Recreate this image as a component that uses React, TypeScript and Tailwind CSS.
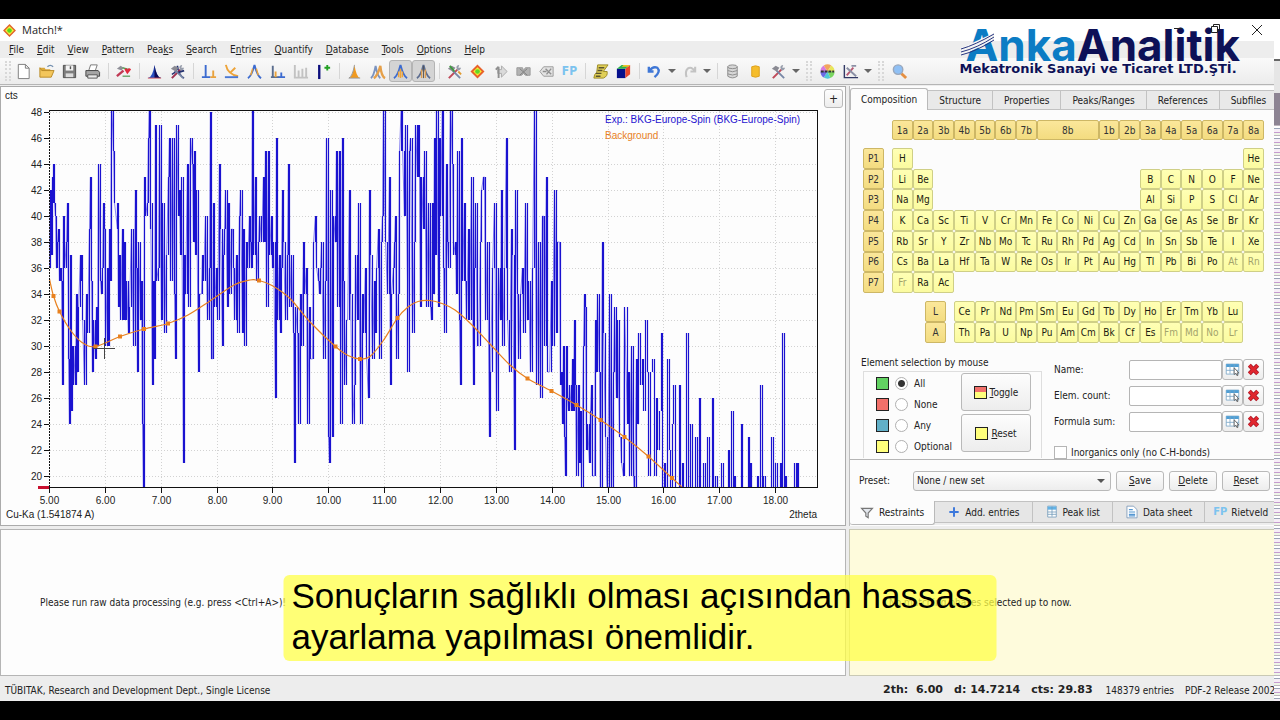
import type { ReactNode } from "react";

const ORANGE = "#e8811f";

// Measured counts, one block per part of the scan: "x,counts" with x in thirds of a pixel.
const SCAN_BLOCKS = [
	{
		offset: 0,
		data: "148,36 150,42 152,37 155,43 158,41 160,44 163,41 165,40 167,36 170,38 174,39 177,35 180,36 182,35 186,27 190,40 193,36 198,38 201,41 204,32 205,29 208,24 211,37 213,25 217,30 220,27 224,30 226,27 229,34 231,28 235,33 239,37 242,35 245,37 247,32 252,27 257,34 262,31 266,39 270,43 273,35 277,28 280,32 284,29 288,33 291,30 295,44 300,35 303,34 306,36 309,41 313,39 316,30 320,36 323,30 328,39 331,35 334,49 338,45 342,41 350,39 351,41 354,33 357,37 361,32 365,39 370,32 372,38 376,32 378,35 383,31 388,33 393,39 399,30 404,42 408,36 412,28 415,38 419,32 422,35 425,24 428,19 431,43 436,40 440,41 443,46 446,49 449,39 451,41 455,27 458,35 461,29 465,47 469,35 473,36 478,47 482,32 486,41 492,31 498,37 503,43 508,46 511,35 517,46 522,34 525,29 529,47 534,40 538,42 541,37 544,43 549,21 553,37 556,34 560,44 565,33 571,46 575,44 578,38 582,45 586,37 589,42 594,28 598,34 602,34 606,37 610,35 614,40 621,32 626,36 630,48 634,29 636,29 639,41 643,33 647,36 651,32 656,44 660,39 665,30 669,37 673,39 676,42 680,33 684,41 688,34 692,39 696,39 699,36 703,32 708,37 712,31 716,40 720,42 725,31 728,39 732,30 737,38 741,36 746,40 750,38 752,36 755,49 758,45 760,37 764,43 769,35 773,38 778,40 782,38 788,43 791,38 795,45 798,33 803,45 807,37 812,40 815,36 818,38 824,26 827,46 832,32 836,37",
	},
	{
		offset: 810,
		data: "30,31 34,36 37,42 40,38 45,32 50,37 54,44 58,33 63,37 68,31 71,21 75,33 80,31 85,24 89,34 93,30 98,37 100,38 103,34 108,36 112,24 116,33 121,29 125,29 129,38 134,40 138,36 143,35 147,34 150,36 154,38 160,29 164,35 169,46 174,23 177,21 180,42 185,23 187,23 190,40 194,38 197,45 201,33 206,45 209,30 211,24 216,46 218,35 223,27 228,32 232,32 236,42 241,34 247,24 251,27 256,37 261,32 265,41 270,24 275,34 279,31 284,36 289,29 293,26 298,42 301,37 306,29 311,35 315,31 318,36 323,39 328,29 332,38 336,40 339,49 344,38 351,34 356,43 360,27 364,34 368,36 371,38 374,40 379,29 384,34 388,45 392,49 397,45 401,40 405,47 410,35 412,28 416,45 421,46 426,31 431,38 436,47 440,43 443,47 446,43 450,33 454,43 459,39 463,45 469,33 475,41 480,33 482,32 485,41 489,34 492,46 496,37 499,49 503,33 508,46 510,40 516,49 519,36 522,31 527,44 531,38 535,36 540,49 545,44 549,37 554,38 558,34 562,45 567,32 569,27 573,46 577,35 581,41 585,35 589,32 593,39 597,32 604,43 608,27 612,36 616,41 620,30 625,30 629,38 634,42 638,43 642,43 646,32 650,38 656,23 660,28 666,36 672,41 679,25 684,36 689,32 693,42 697,30 703,36 708,46 712,32 718,28 722,39 727,37 731,22 736,42 741,34 745,29 750,34 756,36 760,31 765,41 770,32 775,35 780,28 787,36 793,49 798,27 803,38 810,26 815,40 820,40 823,30 827,43 832,28 837,28 842,35 846,30 852,42 857,31 862,38 866,38 869,27",
	},
	{
		offset: 1650,
		data: "33,28 35,24 38,30 43,23 44,20 48,30 51,26 54,25 58,27 62,25 65,29 68,25 72,32 76,27 79,20 83,27 88,21 90,25 94,19 98,30 101,34 104,33 108,22 112,24 116,21 120,25 123,27 127,20 131,20 134,32 139,28 142,34 146,28 151,18 156,38 160,31 165,23 170,18 178,34 184,18 188,28 193,33 197,26 202,32 206,23 211,23 214,21 220,20 223,33 230,24 234,28 238,20 244,30 248,20 252,18 257,29 262,24 265,31 270,27 275,29 280,25 285,32 290,28 295,20 301,28 305,29 311,20 317,26 322,22 328,25 332,31 337,18 342,21 346,18 352,29 356,22 361,18 366,24 370,27 374,18 386,27 390,18 396,21 400,18 408,31 414,18 420,24 425,18 434,23 440,18 446,26 450,18 460,21 465,18 471,23 476,18 485,26 490,18 496,20 500,18 514,21 519,18 533,22 537,18 544,25 548,18 552,20 556,18 572,24 577,18 594,23 598,18 600,21 604,18 620,20 624,18 631,27 636,18 640,20 644,18 664,23 668,18 676,21 680,18 690,21 694,18 697,31 702,18 705,20 708,18 733,21 738,18 742,21 744,18",
	},
];

const countY = (value: number) => 112 + (48 - value) * 13;

const scanPoints = SCAN_BLOCKS.flatMap((block) =>
	block.data.split(" ").map((pair) => {
		const [x, value] = pair.split(",").map(Number);
		return [Math.round((x + block.offset) / 3) + 0.5, countY(value)];
	}),
);
const scanLine = scanPoints
	.filter((p) => p[0] < 640)
	.map((p) => p.join(","))
	.join(" ");
const scanBars = scanPoints
	.slice(1)
	.map((p, i) => `M${p[0]} ${scanPoints[i][1]}V${p[1]}`)
	.join("");

// Background curve; the third entry marks the draggable control points.
const BACKGROUND: [number, number, number][] = [
	[49.5, 279, 0], [53.5, 296, 1], [59.5, 311.5, 1], [70, 329.5, 0], [82, 342.5, 0],
	[95.5, 346.5, 1], [120, 336.5, 1], [144, 329, 1], [168, 323.5, 1], [188, 315, 0],
	[210, 301, 0], [234, 285, 0], [250, 280, 0], [259, 280.5, 1], [272, 285.5, 0],
	[290, 298.5, 0], [310, 322, 0], [335.5, 346.5, 1], [348, 355.5, 0], [360, 359, 1],
	[370, 356.5, 0], [383, 341, 0], [397.5, 318, 1], [408, 307, 0], [418, 301.5, 0],
	[430, 300.5, 0], [442, 303.5, 0], [455, 310, 0], [471, 324, 0], [490, 344, 0],
	[510, 365, 0], [527.5, 378.5, 1], [551.5, 391, 1], [576.5, 405, 1], [600.5, 420, 1],
	[624.5, 437, 1], [648.5, 456.5, 1], [672, 478, 1], [682, 487, 0],
];

const backgroundPath = BACKGROUND.map((p, i) => {
	if (i === 0) return `M${p[0]} ${p[1]}`;
	const a = BACKGROUND[Math.max(i - 2, 0)];
	const b = BACKGROUND[i - 1];
	const d = BACKGROUND[Math.min(i + 1, BACKGROUND.length - 1)];
	return `C${b[0] + (p[0] - a[0]) / 6} ${b[1] + (p[1] - a[1]) / 6} ${p[0] - (d[0] - b[0]) / 6} ${p[1] - (d[1] - b[1]) / 6} ${p[0]} ${p[1]}`;
}).join("");

const X_TICKS = Array.from({ length: 14 }, (_, i) => ({
	x: Math.round(49 + i * 55.85) + 0.5,
	label: `${i + 5}.00`,
}));
const Y_TICKS = Array.from({ length: 15 }, (_, i) => 48 - i * 2);

const Chart = () => (
	<svg
		viewBox="1 87 844 438"
		className="block w-full font-['Liberation_Sans'] text-[10px]"
		role="img"
		aria-label="Diffraction pattern"
	>
		<g fill="#222">
			<text x="5" y="99">cts</text>
			<text x="6" y="518">Cu-Ka (1.541874 A)</text>
			<text x="817" y="518" textAnchor="end">2theta</text>
			{Y_TICKS.map((v) => (
				<text key={v} x="42" y={countY(v) + 4} textAnchor="end">{v}</text>
			))}
			{X_TICKS.map((t) => (
				<text key={t.label} x={t.x} y="504" textAnchor="middle">{t.label}</text>
			))}
		</g>
		<g stroke="#d2d2d2" strokeDasharray="1 2">
			{Y_TICKS.map((v) => (
				<path key={v} d={`M50 ${countY(v) + 0.5}H817`} />
			))}
			{X_TICKS.map((t) => (
				<path key={t.label} d={`M${t.x} 111V487`} />
			))}
		</g>
		<clipPath id="plot">
			<rect x="49" y="111" width="769" height="377" />
		</clipPath>
		<g clipPath="url(#plot)" fill="none">
			<polyline points={scanLine} stroke="#8f8af2" strokeWidth="1" />
			<path d={scanBars} stroke="#1a12d0" strokeWidth="1.2" />
			<path d={backgroundPath} stroke={ORANGE} strokeWidth="1.2" />
		</g>
		<g fill={ORANGE}>
			{BACKGROUND.filter((p) => p[2]).map((p) => (
				<rect key={p[0]} x={p[0] - 2} y={p[1] - 2} width="4" height="4" />
			))}
		</g>
		<path d="M93 348.5H115M104.5 338V359" stroke="#444" />
		<path d="M49 110.5H818M817.5 110V488M49 487.5H818" stroke="#111" fill="none" />
		<path d="M49.5 110V488" stroke="#111" strokeDasharray="2 1" />
		<g stroke="#111">
			{Y_TICKS.map((v) => (
				<path key={v} d={`M44 ${countY(v) + 0.5}H49`} />
			))}
			{X_TICKS.map((t) => (
				<path key={t.label} d={`M${t.x} 488V493`} />
			))}
		</g>
		<path d="M38 487.5H49" stroke="#c8102e" strokeWidth="3" />
		<text x="605" y="123" fill="#1f14d0">Exp.: BKG-Europe-Spin (BKG-Europe-Spin)</text>
		<text x="605" y="139" fill={ORANGE}>Background</text>
	</svg>
);

const Mnemonic = ({ text }: { text: string }) => {
	const [before, after] = text.split("&");
	if (after === undefined) return <>{text}</>;
	return (
		<span>
			{before}
			<u className="underline-offset-1">{after[0]}</u>
			{after.slice(1)}
		</span>
	);
};

const Icon = ({ children, size = 18 }: { children: ReactNode; size?: number }) => (
	<svg viewBox="0 0 18 18" width={size} height={size} fill="none" className="shrink-0" aria-hidden="true">
		{children}
	</svg>
);

const DiamondIcon = ({ size = 18 }: { size?: number }) => (
	<Icon size={size}>
		<path d="M9 1.5L16.5 9L9 16.5L1.5 9Z" fill="#f5f03a" stroke="#e0642a" strokeWidth="2" />
		<circle cx="9" cy="9" r="3.2" fill="#58d81f" />
	</Icon>
);

const Tools = ({ handle = "#c04a5a" }: { handle?: string }) => (
	<>
		<path d="M3 16L12 7" stroke={handle} strokeWidth="2.2" />
		<path d="M15 16L7 8" stroke="#7787a6" strokeWidth="2" />
		<path d="M2 6L6 3L10 5L7 9Z" fill="#8a8a93" />
		<path d="M11 5Q11 2 14 2L13 5L16 5Q15 8 12 8Z" fill="#979dab" />
	</>
);

const Peak = ({ color }: { color: string }) => (
	<path d="M3 16Q7 15 9 2Q11 15 15 16Z" fill={color} />
);

const Cylinder = ({ color, edge }: { color: string; edge: string }) => (
	<>
		<path d="M4 4V14Q9 17.500 14 14V4Z" fill={color} stroke={edge} />
		<ellipse cx="9" cy="4" rx="5" ry="2" fill={color} stroke={edge} />
	</>
);

type Tool = { name: string; icon?: ReactNode; pressed?: boolean; kind?: "sep" | "arrow" | "handle" };

const sep: Tool = { name: "", kind: "sep" };

const TOOLS: Tool[] = [
	{ name: "New", icon: <path d="M3.500 1.500H11L15 5.500V16.500H3.500ZM11 1.500V5.500H15" fill="#fff" stroke="#7b7b7b" /> },
	{
		name: "Open",
		icon: (
			<>
				<path d="M2 5H7L8 6.500H13V9H2Z" fill="#d9a83c" />
				<path d="M2 15V5L4 8H17L14 15Z" fill="#f3c65c" stroke="#b98a28" />
				<path d="M10 4Q13 1 16 4" stroke="#7390b0" strokeWidth="1.500" />
			</>
		),
	},
	{
		name: "Save",
		icon: (
			<>
				<path d="M2.500 2.500H15.500V15.500H2.500Z" fill="#7d7d7d" stroke="#4c4c4c" />
				<path d="M5 2.500H13V8H5Z" fill="#f4f4f4" />
				<path d="M5 11H13V15H5Z" fill="#dcdcdc" />
				<path d="M10 3.500V6.500" stroke="#555" strokeWidth="1.500" />
			</>
		),
	},
	{
		name: "Print",
		icon: (
			<>
				<path d="M5 8L7 2H14L12 8Z" fill="#fff" stroke="#777" />
				<path d="M2 8H15L16.500 10V14H2Z" fill="#a5a5a5" stroke="#444" />
				<path d="M4 12.500H14V16H4Z" fill="#e8e8e8" stroke="#555" />
			</>
		),
	},
	sep,
	{
		name: "Import",
		icon: (
			<>
				<path d="M2 14L9 8" stroke="#c03a55" strokeWidth="2.500" />
				<path d="M2 6L6 3L9 5L7 8Z" fill="#8f8f98" />
				<path d="M8 5L15 7" stroke="#5aa355" strokeWidth="1.500" />
				<path d="M10 7Q12 4 13 7Q15 4 17 7L13 12Z" fill="#e02c3e" />
				<path d="M8 14H16" stroke="#6aa56b" strokeWidth="1.500" />
			</>
		),
	},
	sep,
	{
		name: "Process raw data",
		icon: (
			<>
				<path d="M2 16Q7 15 9 2Q11 15 16 16Z" fill="#2a4fc0" />
				<path d="M9 2Q11 15 16 16H9Z" fill="#0d0a55" />
				<path d="M2 16H16" stroke="#cf5560" />
			</>
		),
	},
	{
		name: "Processing options",
		icon: (
			<>
				<path d="M9 3Q10 13 16 16M9 3Q8 10 3 12" stroke="#23306e" strokeWidth="1.500" />
				<Tools handle="#a03050" />
				<path d="M10 10L16 8" stroke="#23306e" strokeWidth="2" />
			</>
		),
	},
	sep,
	{ name: "Strip alpha2", icon: <><path d="M6 2V15M2 15H11" stroke="#3c6bd0" strokeWidth="2" /><path d="M14 8V15M11 15H17" stroke="#e9a23c" strokeWidth="2" /></> },
	{ name: "Subtract background", icon: <><path d="M3 2Q5 12 16 14M8 10L13 5" stroke="#eda43a" strokeWidth="2" /><path d="M2 15H16" stroke="#4a78d4" strokeWidth="2" /></> },
	{ name: "Smooth", icon: <><path d="M2 16Q6 14 9 2Q12 14 16 16" stroke="#3c6bd0" strokeWidth="2" /><path d="M5 13L7 6M11 6L13 13" stroke="#eda43a" strokeWidth="1.500" /></> },
	{ name: "Search peaks", icon: <><path d="M4 3V15M2 15H11" stroke="#5a6d8e" strokeWidth="2" /><path d="M7 9V15" stroke="#eda43a" strokeWidth="2" /><path d="M13 10V15M10 15H17" stroke="#3c6bd0" strokeWidth="2" /></> },
	{ name: "Profile", icon: <path d="M3 2V15M7 8V15M11 6V15M15 5V15M2 15.500H17" stroke="#c2c2c2" strokeWidth="2" /> },
	{ name: "Add peak", icon: <><path d="M4.500 2V17" stroke="#0b0d7c" strokeWidth="2.500" /><path d="M10 5H16M13 2V8" stroke="#23a023" strokeWidth="2" /></> },
	sep,
	{ name: "Fit one", icon: <><Peak color="#f09a20" /><path d="M9 2Q7 14 3 16H15" stroke="#999" /></> },
	{ name: "Fit group", icon: <><path d="M2 16Q5 14 7 3Q9 14 12 16" stroke="#7b93bf" strokeWidth="2" /><path d="M5 16Q9 14 12 3Q13 14 17 16" stroke="#e5a04a" strokeWidth="2.500" /></> },
	{ name: "Fit profile", pressed: true, icon: <><path d="M2 16Q6 14 9 2Q12 14 16 16" stroke="#3c6bd0" strokeWidth="2" /><path d="M9 6V16M7 9V15M11 9V15" stroke="#eda43a" strokeWidth="1.500" /></> },
	{ name: "Show peaks", pressed: true, icon: <><path d="M2 16Q6 14 9 2Q12 14 16 16" stroke="#5b6c90" strokeWidth="2" /><path d="M7 7V16M11 7V16" stroke="#dc9d50" strokeWidth="1.500" /><path d="M9 3V16" stroke="#555" /></> },
	sep,
	{ name: "Search options", icon: <><Tools /><path d="M4 3L9 9" stroke="#3f9a3f" strokeWidth="2" /><path d="M13 9L16 12" stroke="#e09a30" strokeWidth="2" /></> },
	{ name: "Start search", icon: <><path d="M9 3L15 9L9 15L3 9Z" fill="#f5ee30" stroke="#e8602a" strokeWidth="2" /><circle cx="9" cy="9" r="2.500" fill="#62d62a" /></> },
	{ name: "Select entry", icon: <><path d="M10 3L16 9L10 15V11H6V7H10Z" fill="#dadada" stroke="#aaa" /><path d="M7 4V16M4 7L7 4" stroke="#8f8f8f" strokeWidth="2" /></> },
	{ name: "Discard", icon: <><path d="M2 5H8L9 8L11 5H16V13H11L9 11L7 13H2Z" fill="#b3b3b3" stroke="#999" /><path d="M5 6L13 13M13 6L5 13" stroke="#7d7d7d" /></> },
	{ name: "Structure", icon: <><path d="M6 4H16V14H6L2 9Z" fill="#e3e3e3" stroke="#9a9a9a" /><path d="M5 9H9M8 6L14 12M14 6L9 12" stroke="#909090" strokeWidth="1.500" /></> },
	{ name: "Full pattern", icon: <span className="text-[12px] font-bold text-[#7cc3ef]">FP</span> },
	sep,
	{ name: "Report", icon: <><path d="M6 2H17L12 9H16Q17 14 12 16H2Q2 12 5 10Z" fill="#e0cf58" stroke="#9c8a22" /><path d="M7 5H13M6 8H11M4 11H10M4 14H9" stroke="#5b5530" strokeWidth="1.500" /></> },
	{ name: "3D view", icon: <><path d="M2 6H11V16H2Z" fill="#06108c" /><path d="M2 6L7 2H16L11 6Z" fill="#2bb34a" /><path d="M11 6L16 2V12L11 16Z" fill="#e8472c" /><path d="M9 2H16L14 4H7Z" fill="#f0c32a" /></> },
	sep,
	{ name: "Undo", icon: <path d="M3 4V9H8M3 9Q7 3 12 5Q16 9 9 15" stroke="#3f77d6" strokeWidth="2.500" /> },
	{ name: "Undo list", kind: "arrow" },
	{ name: "Redo", icon: <path d="M15 4V9H10M15 9Q11 3 7 6Q4 9 6 15" stroke="#c3c3c3" strokeWidth="2.200" /> },
	{ name: "Redo list", kind: "arrow" },
	sep,
	{ name: "Reference database", icon: <><Cylinder color="#d6d6d6" edge="#8b8b8b" /><path d="M4 8Q9 10.500 14 8M4 11.500Q9 14 14 11.500" stroke="#8b8b8b" /></> },
	{ name: "User database", icon: <path d="M5 4Q9 2 13 4V14Q9 16 5 14Z" fill="#f5bd2c" stroke="#dda01f" /> },
	{ name: "Database tools", icon: <Tools /> },
	{ name: "Database tools list", kind: "arrow" },
	{ name: "", kind: "handle" },
	{
		name: "Colors",
		icon: (
			<>
				<path d="M9 9L1.500 9A7.500 7.500 0 0 1 5 2.600Z" fill="#d77be0" />
				<path d="M9 9L5 2.600A7.500 7.500 0 0 1 13 2.600Z" fill="#f2a55e" />
				<path d="M9 9L13 2.600A7.500 7.500 0 0 1 16.500 9Z" fill="#e8e65a" />
				<path d="M9 9L16.500 9A7.500 7.500 0 0 1 12 15.900Z" fill="#7ad65f" />
				<path d="M9 9L12 15.900A7.500 7.500 0 0 1 5 15.400Z" fill="#52c9d8" />
				<path d="M9 9L5 15.400A7.500 7.500 0 0 1 1.500 9Z" fill="#6c6ae6" />
				<path d="M2 9H16" stroke="#333" strokeWidth="2" strokeDasharray="3 1" />
			</>
		),
	},
	{ name: "Graph options", icon: <><path d="M2.500 2V15.500H17" stroke="#333a66" strokeWidth="1.500" /><path d="M5 13L12 5" stroke="#b65a74" strokeWidth="2" /><path d="M5 5L15 14M10 3H15" stroke="#8b90a5" strokeWidth="2" /></> },
	{ name: "Graph options list", kind: "arrow" },
	{ name: "", kind: "handle" },
	{ name: "Zoom", icon: <><path d="M11 11L16 16" stroke="#e59042" strokeWidth="3" /><circle cx="7.500" cy="7" r="5" fill="#8fc0f5" stroke="#9aa7bb" strokeWidth="1.500" /></> },
];

const ToolbarItem = ({ tool }: { tool: Tool }) => {
	if (tool.kind === "sep") return <span className="mr-[3px] ml-1 h-4 w-px shrink-0 border-r border-[#d6d6d6]" />;
	if (tool.kind === "handle") {
		return <span className="mx-1 h-5 w-[6px] shrink-0 border-x-2 border-dotted border-[#d8d8d8]" />;
	}
	if (tool.kind === "arrow") {
		return (
			<button type="button" aria-label={tool.name} className="flex w-3 shrink-0 justify-center">
				<span className="border-x-4 border-t-4 border-x-transparent border-t-[#666]" />
			</button>
		);
	}
	return (
		<button
			type="button"
			aria-label={tool.name}
			className={
				tool.pressed
					? "flex h-[22px] w-[23px] shrink-0 items-center justify-center rounded-[3px] border border-[#b4b4b4] bg-[#d4d4d4]"
					: "flex h-[22px] w-[23px] shrink-0 items-center justify-center"
			}
		>
			{tool.name === "Full pattern" ? tool.icon : <Icon size={17}>{tool.icon}</Icon>}
		</button>
	);
};

const MENUS = ["&File", "&Edit", "&View", "&Pattern", "Pea&ks", "&Search", "E&ntries", "&Quantify", "&Database", "&Tools", "&Options", "&Help"];

const GROUPS = ["1a", "2a", "3b", "4b", "5b", "6b", "7b", "8b", "1b", "2b", "3a", "4a", "5a", "6a", "7a", "8a"];

const PERIODS = [
	"H - - - - - - - - - - - - - - - - He",
	"Li Be - - - - - - - - - - B C N O F Ne",
	"Na Mg - - - - - - - - - - Al Si P S Cl Ar",
	"K Ca Sc Ti V Cr Mn Fe Co Ni Cu Zn Ga Ge As Se Br Kr",
	"Rb Sr Y Zr Nb Mo Tc Ru Rh Pd Ag Cd In Sn Sb Te I Xe",
	"Cs Ba La Hf Ta W Re Os Ir Pt Au Hg Tl Pb Bi Po At Rn",
	"Fr Ra Ac - - - - - - - - - - - - - - -",
];

const SERIES = [
	"Ce Pr Nd Pm Sm Eu Gd Tb Dy Ho Er Tm Yb Lu",
	"Th Pa U Np Pu Am Cm Bk Cf Es Fm Md No Lr",
];

const DISABLED = ["At", "Rn", "Fr", "Fm", "Md", "No", "Lr"];

const ElementCell = ({ symbol }: { symbol: string }) => {
	if (symbol === "-") return <span />;
	return (
		<button
			type="button"
			disabled={DISABLED.includes(symbol)}
			className="rounded-[2px] border border-[#cfcf86] bg-linear-to-b from-[#ffffb4] to-[#fbfba0] text-[#1c1c10] disabled:text-[#a3a36a]"
		>
			{symbol}
		</button>
	);
};

const HeadCell = ({ label, wide = false }: { label: string; wide?: boolean }) => (
	<button
		type="button"
		className={
			wide
				? "col-span-3 rounded-[2px] border border-[#cdb765] bg-linear-to-b from-[#fbe79a] to-[#f3dc80] text-[#333]"
				: "rounded-[2px] border border-[#cdb765] bg-linear-to-b from-[#fbe79a] to-[#f3dc80] text-[#333]"
		}
	>
		{label}
	</button>
);

const PeriodicTable = () => (
	<div className="grid grid-cols-[21px_1fr] gap-x-2 gap-y-2 pt-[10px] pr-[10px] pl-[13px]">
		<div className="col-start-2 grid h-5 grid-cols-18">
			{GROUPS.map((g) => (
				<HeadCell key={g} label={g} wide={g === "8b"} />
			))}
		</div>
		<div className="grid h-[145px] grid-rows-7">
			{PERIODS.map((_, i) => (
				<HeadCell key={i} label={`P${i + 1}`} />
			))}
		</div>
		<div className="grid h-[145px] grid-cols-18 grid-rows-7">
			{PERIODS.flatMap((row, r) => row.split(" ").map((s, i) => <ElementCell key={`${r}-${i}`} symbol={s} />))}
		</div>
		<div className="col-start-2 grid h-[42px] grid-cols-18 grid-rows-2">
			{SERIES.map((row, r) => (
				<div key={row} className="contents">
					<div className="col-span-3 grid grid-cols-[21px] justify-end pr-2">
						<HeadCell label={r === 0 ? "L" : "A"} />
					</div>
					{row.split(" ").map((s) => <ElementCell key={s} symbol={s} />)}
					<span />
				</div>
			))}
		</div>
	</div>
);

const BUTTON = "rounded-[3px] border border-[#b9b9b9] bg-linear-to-b from-[#fdfdfd] to-[#ededed]";

const MODES = [
	{ label: "All", swatch: "size-[13px] border border-[#222] bg-[#62d262]" },
	{ label: "None", swatch: "size-[13px] border border-[#222] bg-[#f2706a]" },
	{ label: "Any", swatch: "size-[13px] border border-[#222] bg-[#62b0c8]" },
	{ label: "Optional", swatch: "size-[13px] border border-[#222] bg-[#ffff7c]" },
];

const SelectionBox = () => (
	<fieldset className="ml-[13px] w-[179px]">
		<legend className="-ml-[2px] leading-4">Element selection by mouse</legend>
		<div className="flex h-[87px] justify-between border-x border-t border-[#dedede] pt-px pr-[10px] pl-3">
			<div>
				{MODES.map((m) => (
					<label key={m.label} className="flex h-[21px] items-center gap-[6px]">
						<span className={m.swatch} />
						<input
							type="radio"
							name="mode"
							defaultChecked={m.label === "All"}
							className="size-[13px] appearance-none rounded-full border border-[#b0b0b0] bg-white checked:bg-[radial-gradient(circle,#333_3px,#fff_4px)]"
						/>
						{m.label}
					</label>
				))}
			</div>
			<div className="flex w-[70px] flex-col gap-[3px]">
				<button type="button" className={`${BUTTON} flex h-[38px] items-center justify-center gap-[3px]`}>
					<span className="size-[13px] border border-[#222] bg-linear-to-b from-[#f2706a] from-50% to-[#ffff7c] to-50%" />
					<Mnemonic text="&Toggle" />
				</button>
				<button type="button" className={`${BUTTON} flex h-[38px] items-center justify-center gap-[3px]`}>
					<span className="size-[13px] border border-[#222] bg-[#ffff7c]" />
					<Mnemonic text="&Reset" />
				</button>
			</div>
		</div>
	</fieldset>
);

const TableIcon = () => (
	<Icon size={15}>
		<path d="M1.500 2.500H16.500V14.500H1.500Z" fill="#fff" stroke="#7ba6c6" />
		<path d="M1.500 2.500H16.500V6H1.500Z" fill="#4f9ed4" />
		<path d="M1.500 10H16.500M6 3V14M11 3V14" stroke="#7ba6c6" />
		<path d="M11 7V15L13 13.500L14.500 16.500L15.500 16L14.500 13H16.500Z" fill="#fff" stroke="#555" />
	</Icon>
);

const FormulaField = ({ label, id }: { label: string; id: string }) => (
	<div className="flex h-[21px] items-center">
		<label htmlFor={id} className="w-[75px]">{label}</label>
		<input id={id} type="text" className="h-5 w-0 flex-1 rounded-[2px] border border-[#b5b5b5] bg-white px-1" />
		<button type="button" aria-label={`Select ${label}`} className={`${BUTTON} flex h-[21px] w-[21px] items-center justify-center`}>
			<TableIcon />
		</button>
		<button type="button" aria-label={`Clear ${label}`} className={`${BUTTON} flex h-[21px] w-[21px] items-center justify-center`}>
			<Icon size={15}>
				<path d="M4 4L14 14M14 4L4 14" stroke="#9b1020" strokeWidth="5" />
				<path d="M4 4L14 14M14 4L4 14" stroke="#e0262e" strokeWidth="3.500" />
			</Icon>
		</button>
	</div>
);

const TOP_TABS = ["Structure", "Properties", "Peaks/Ranges", "References", "Subfiles"];

const BOTTOM_TABS = [
	{ label: "Add. entries", icon: <path d="M3 9H15M9 3V15" stroke="#3c78dc" strokeWidth="2.500" /> },
	{ label: "Peak list", icon: <><path d="M3.500 1.500H14.500V15.500H3.500Z" fill="#fff" stroke="#6f98b8" /><path d="M3.500 2H14.500V6H3.500Z" fill="#62b2e6" /><path d="M9 2V15M3.500 9H14.500M3.500 12H14.500" stroke="#6f98b8" /></> },
	{ label: "Data sheet", icon: <><path d="M2.500 1.500H11L15.500 6V16.500H2.500Z" fill="#fff" stroke="#7191b4" /><path d="M5 6H10M5 9H13M5 12H13M5 14H13" stroke="#5597d2" strokeWidth="1.500" /></> },
];

const RightPanel = () => (
	<section className="flex w-[425px] shrink-0 flex-col overflow-hidden border-l border-[#bdbdbd] bg-[#fcfcfc]">
		<div className="mt-[2px] flex h-[22px] shrink-0 items-end whitespace-nowrap" role="tablist">
			<button type="button" role="tab" aria-selected="true" className="h-[22px] shrink-0 rounded-t-[3px] border-x border-t border-[#b9b9b9] bg-[#fcfcfc] px-[10px]">
				Composition
			</button>
			{TOP_TABS.map((t) => (
				<button key={t} type="button" role="tab" className="h-5 shrink-0 border-y border-r border-[#c2c2c2] bg-[#e9e9e9] px-[11px]">
					{t}
				</button>
			))}
		</div>
		<PeriodicTable />
		<div className="mt-3 flex h-[105px] gap-3 overflow-hidden border-b border-[#b5b5b5] pr-[10px]">
			<SelectionBox />
			<div className="flex-1 pt-1">
				<div className="flex flex-col gap-[5px]">
					<FormulaField id="name" label="Name:" />
					<FormulaField id="count" label="Elem. count:" />
					<FormulaField id="sum" label="Formula sum:" />
				</div>
				<label className="mt-[10px] flex h-5 items-center gap-1">
					<input type="checkbox" className="size-[13px] appearance-none border border-[#b5b5b5] bg-white" />
					Inorganics only (no C-H-bonds)
				</label>
			</div>
		</div>
		<div className="flex h-[41px] shrink-0 items-center gap-[5px] pr-1 pl-[9px]">
			<label htmlFor="preset" className="w-[49px]">Preset:</label>
			<div className="relative flex-1">
				<select id="preset" className={`${BUTTON} h-5 w-full appearance-none px-[3px]`}>
					<option>None / new set</option>
				</select>
				<span className="pointer-events-none absolute top-2 right-[6px] border-x-4 border-t-4 border-x-transparent border-t-[#555]" />
			</div>
			<button type="button" className={`${BUTTON} h-5 w-12`}><Mnemonic text="&Save" /></button>
			<button type="button" className={`${BUTTON} h-5 w-12`}><Mnemonic text="&Delete" /></button>
			<button type="button" className={`${BUTTON} h-5 w-12`}><Mnemonic text="&Reset" /></button>
		</div>
		<div className="flex h-6 shrink-0 items-start bg-[#ededed] whitespace-nowrap" role="tablist">
			<button type="button" role="tab" aria-selected="true" className="flex h-6 items-center gap-[5px] rounded-b-[3px] border-r border-b border-[#b9b9b9] bg-[#fcfcfc] px-[10px]">
				<Icon size={14}>
					<path d="M2 3H16L10.500 9V15L7.500 13V9Z" fill="#e4e8ee" stroke="#777" strokeWidth="1.500" />
				</Icon>
				Restraints
			</button>
			{BOTTOM_TABS.map((t) => (
				<button key={t.label} type="button" role="tab" className="flex h-[22px] items-center gap-1 border-y border-r border-[#c2c2c2] bg-[#e6e6e6] px-3">
					<Icon size={14}>{t.icon}</Icon>
					{t.label}
				</button>
			))}
			<button type="button" role="tab" className="flex h-[22px] flex-1 items-center gap-1 border-y border-[#c2c2c2] bg-[#e6e6e6] pl-2">
				<span className="text-[11px] font-bold text-[#7cc3ef]">FP</span>
				Rietveld
			</button>
		</div>
	</section>
);

const Logo = () => (
	<div className="absolute top-2 right-[40px] text-[#0d1157]">
		<div className="relative font-['Inter'] text-[44px] leading-[36px] font-bold">
			<span className="text-[#0b7cc4]">Anka</span>Analitik
			<svg viewBox="0 0 34 26" width="34" height="26" className="absolute top-1 -left-1" aria-hidden="true">
				<path d="M0 17L33 2V9L0 25Z" fill="#f4f4f4" />
				<path d="M0 18Q14 14 33 3M0 21Q16 17 33 6M0 24Q16 20 33 9" stroke="#27357f" fill="none" />
			</svg>
		</div>
		<div className="-ml-[6px] font-['DejaVu_Sans'] text-[13px] leading-3 font-bold whitespace-nowrap">
			Mekatronik Sanayi ve Ticaret LTD.ŞTİ.
		</div>
	</div>
);

// Slice of the window behind, visible along the right edge.
const BackdropStrip = () => (
	<div className="flex w-[6px] shrink-0 flex-col bg-white">
		<div className="h-[42px] border-b-2 border-[#666]" />
		<div className="h-8 bg-[#e6e6e6]" />
		<div className="h-8 bg-[#8d8493]" />
		<div className="flex-1 bg-[repeating-linear-gradient(180deg,#bdb4bd_0_1px,#fff_1px_3px,#9aa5b8_3px_4px,#f6eef6_4px_7px,#c79bd0_7px_8px,#eef6e8_8px_10px)]" />
	</div>
);

const App = () => (
	<div className="flex h-screen flex-col overflow-hidden bg-black pt-[19px] pb-[19px] font-['DejaVu_Sans_Condensed','DejaVu_Sans',sans-serif] text-[10px] text-[#222]">
		<div className="relative flex min-h-0 flex-1">
			<div className="flex min-w-0 flex-1 flex-col bg-[#ededed]">
				<header className="flex h-[22px] shrink-0 items-center gap-[6px] bg-white pl-[3px] font-['Open_Sans'] text-[11px]">
					<DiamondIcon size={13} />
					<h1>Match!*</h1>
					<button type="button" aria-label="Close" className="mr-3 ml-auto">
						<svg viewBox="0 0 10 10" width="10" height="10" stroke="#222" aria-hidden="true">
							<path d="M0 0L10 10M10 0L0 10" />
						</svg>
					</button>
				</header>
				<nav className="flex h-[17px] shrink-0 items-center gap-[13px] bg-[#ededed] pl-[9px]">
					{MENUS.map((m) => (
						<button key={m} type="button"><Mnemonic text={m} /></button>
					))}
				</nav>
				<div className="flex h-[27px] shrink-0 items-center border-b border-[#b5b5b5] bg-linear-to-b from-[#fafafa] to-[#ececec] pl-[5px]" role="toolbar">
					<span className="mr-[1px] h-5 w-[6px] shrink-0 border-x-2 border-dotted border-[#d8d8d8]" />
					{TOOLS.map((t, i) => <ToolbarItem key={i} tool={t} />)}
				</div>
				<main className="mt-px flex min-h-0 flex-1 flex-col gap-[3px]">
					<div className="flex gap-[3px]">
						<section className="relative min-w-0 flex-1 border border-[#ababab] bg-[#fdfdfd]">
							<Chart />
							<button type="button" className={`${BUTTON} absolute top-[2px] right-[2px] h-[19px] w-[19px] text-[12px] leading-3`}>+</button>
						</section>
						<RightPanel />
					</div>
					<div className="flex min-h-0 flex-1 gap-[3px]">
						<section className="flex min-w-0 flex-1 items-center border border-[#b5b5b5] bg-[#fdfdfd] pl-[39px]">
							{"Please run raw data processing (e.g. press <Ctrl+A>)!"}
						</section>
						<section className="flex w-[425px] shrink-0 items-center border-y border-l border-[#c9c9b5] bg-[#fefbdc] pl-[39px]">
							No matching phases selected up to now.
						</section>
					</div>
				</main>
				<footer className="flex h-[25px] shrink-0 items-center overflow-hidden pt-[3px] pl-[5px] whitespace-nowrap">
					<span className="flex-1">TÜBITAK, Research and Development Dept., Single License</span>
					<div className="flex gap-[11px] font-['DejaVu_Sans'] text-[11px] font-bold">
						<span>2th: &nbsp;6.00</span>
						<span>d: 14.7214</span>
						<span>cts: 29.83</span>
					</div>
					<span className="ml-[13px]">148379 entries</span>
					<span className="ml-[11px] w-[89px] overflow-hidden">PDF-2 Release 2002</span>
				</footer>
			</div>
			<BackdropStrip />
			<Logo />
			<svg viewBox="0 0 46 12" width="46" height="12" className="absolute top-1 right-[60px]" stroke="#222" fill="none" aria-hidden="true">
				<path d="M0 5.500H8M37.500 3.500H43.500V9.500H37.500ZM39.500 3V1.500H45.500V7.500H44" />
			</svg>
		</div>
		<p className="absolute bottom-[59px] left-1/2 w-[713px] -translate-x-1/2 rounded-[6px] bg-[#ffff48]/75 px-2 pb-1 font-['Liberation_Sans'] text-[35px] leading-[41px] text-black">
			Sonuçların sağlıklı olması açısından hassas ayarlama yapılması önemlidir.
		</p>
	</div>
);

export default App;
